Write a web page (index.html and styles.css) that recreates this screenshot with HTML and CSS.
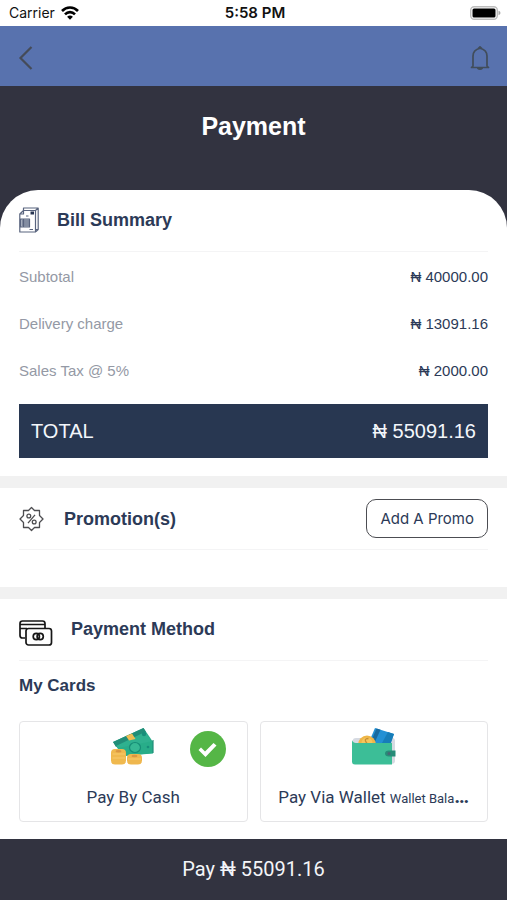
FILE: index.html
```html
<!DOCTYPE html>
<html lang="en">
<head>
<meta charset="utf-8">
<meta name="viewport" content="width=device-width, initial-scale=1">
<title>Payment</title>
<link rel="stylesheet" href="styles.css">
</head>
<body>
<div class="status">
  <div class="carrier">Carrier
    <svg width="18" height="14" viewBox="0 0 18 14" fill="none" stroke="#000" stroke-width="2.6" aria-hidden="true"><path d="M1 5C5.500 .3 12.500 .3 17 5M4 8.300C6.800 5.400 11.200 5.400 14 8.300"/><path d="M9 13.800 6.100 10.800Q9 8.400 11.900 10.800Z" fill="#000" stroke="none"/></svg>
  </div>
  <div class="time">5:58 PM</div>
  <svg class="battery" width="31" height="14" viewBox="0 0 31 14" aria-hidden="true"><rect x=".7" y=".7" width="26.600" height="12.600" rx="3.500" fill="#fff" stroke="#bdbdbd" stroke-width="1.400"/><rect x="2.500" y="2.500" width="23" height="9" rx="1.500"/><path d="M28.500 4.800q2 .6 2 2.200t-2 2.200z" fill="#aaa"/></svg>
</div>
<header class="nav">
  <button class="icon-button" type="button" aria-label="Back">
    <svg width="16" height="26" viewBox="0 0 16 26" fill="none" stroke="#454b58" stroke-width="2.200" aria-hidden="true"><path d="M14.500 2 3.500 13 14.500 24"/></svg>
  </button>
  <button class="icon-button" type="button" aria-label="Notifications">
    <svg width="20" height="26" viewBox="0 0 20 26" fill="none" stroke="#414d5b" stroke-width="1.700" stroke-linejoin="round" aria-hidden="true"><path d="M3 21V11C3 7 6 4.300 10 3.300C14 4.300 17 7 17 11V21L18.500 22.500H1.500ZM8.200 3.600 10 1.800 11.800 3.600M7.500 23Q10 25.300 12.500 23"/></svg>
  </button>
</header>
<main>
  <div class="hero"><h1>Payment</h1></div>
  <div class="backdrop">
    <section class="panel bill">
      <div class="heading">
        <svg width="20" height="26" viewBox="0 0 20 26" fill="none" stroke="#59647e" stroke-width="1.200" stroke-linejoin="round" aria-hidden="true"><path d="M4.500 3.500V1H19.200V22.500H17M16.500 3.500 19.200 1M.8 7 4.500 3.500H16.500V25H.8ZM.8 7H4.500V3.500M17 24.500 19.200 22.500"/><path d="M1.500 12H10.500V20H1.500Z" fill="#aeb6c5"/><path d="M3 14H10M3 16H10M3 18H10M4.500 12V20M7 9H9.500M10.500 22.500H14"/><path d="M11.500 4.500H15V7.500H11.500Z" fill="#283653" stroke="none"/></svg>
        <h2>Bill Summary</h2>
      </div>
      <dl class="charges">
        <div><dt>Subtotal</dt><dd>₦ 40000.00</dd></div>
        <div><dt>Delivery charge</dt><dd>₦ 13091.16</dd></div>
        <div><dt>Sales Tax @ 5%</dt><dd>₦ 2000.00</dd></div>
      </dl>
      <div class="total"><span>TOTAL</span><span>₦ 55091.16</span></div>
    </section>
  </div>
  <section class="panel promo">
    <div class="heading">
      <svg width="25" height="26" viewBox="0 0 25 26" fill="none" stroke="#4d4d50" stroke-width="1.300" stroke-linejoin="round" aria-hidden="true"><path d="M12.500 1.500 15.500 4.500H20.500V9.500L24 13 20.500 16.500V21.500H15.500L12.500 24.500 9.500 21.500H4.500V16.500L1 13 4.500 9.500V4.500H9.500Z"/><circle cx="9.800" cy="10" r="1.900"/><circle cx="15.200" cy="16" r="1.900"/><path d="M16 8.800 9 17.200"/></svg>
      <h2>Promotion(s)</h2>
      <button class="add" type="button">Add A Promo</button>
    </div>
  </section>
  <section class="panel method">
    <div class="heading">
      <svg width="34" height="34" viewBox="0 -8 34 34" fill="none" stroke="#171717" stroke-width="1.700" aria-hidden="true"><path d="M6 18H3.500Q1 18 1 15.500V3.500Q1 1 3.500 1H23.500Q26 1 26 3.500V8M1 4.500H26M1 8.500H8"/><rect x="7" y="8.500" width="25.500" height="16.500" rx="2.500" fill="#fff"/><circle cx="17.300" cy="16.500" r="3.100"/><circle cx="21.200" cy="16.500" r="3.100"/></svg>
      <h2>Payment Method</h2>
    </div>
    <h3>My Cards</h3>
    <div class="cards">
      <label class="card">
        <input type="radio" name="method" checked>
        <svg width="44" height="40" viewBox="0 0 44 40" aria-hidden="true"><path d="M2 15 32.500 1 42 15 13 30Z" fill="#2aaa8b"/><path d="M2 15 32.500 1 35 5 5 20Z" fill="#218d78"/><path d="M5 19 34 5 39 12 42 26 13 29Z" fill="#2fb18f"/><path d="M7 21 42 14V26.500L10 29Z" fill="#28ad89"/><path d="M42 13V26" stroke="#218d78" stroke-width="1.200"/><ellipse cx="24" cy="20.500" rx="5.500" ry="5" fill="#36b894" stroke="#168d76" stroke-width="1.200"/><circle cx="33" cy="7" r="2.200" fill="#178e7a"/><circle cx="37" cy="20" r="1.300" fill="#178e7a"/><path d="M15 9 21 6.500 24.500 12 18 13.500Z" fill="#efbd53"/><rect y="22" width="15" height="15.500" rx="4" fill="#f0b94e"/><rect x="16" y="27" width="15" height="10.500" rx="4" fill="#efb74e"/><path d="M1.500 27H14M1.500 31H14M17 32H30" stroke="#f8ca6d" stroke-width="1.200"/><ellipse cx="7.500" cy="24.300" rx="3" ry="1.300" fill="#d99643"/><ellipse cx="23.500" cy="29" rx="3" ry="1.300" fill="#d99643"/></svg>
        <span class="name">Pay By Cash</span>
      </label>
      <label class="card">
        <input type="radio" name="method">
        <svg width="44" height="40" viewBox="0 0 44 40" aria-hidden="true"><path d="M1 15V13Q1 11 4 11H40Q43 11 43 14V34Q43 37 39 37H4Z" fill="#d6dae2"/><path d="M17 15 23 1 42 7 38 16.500H17Z" fill="#2290d4"/><path d="M24.500 1.500 28.500 2.700 22 17H18Z" fill="#17699f"/><path d="M36 5 42 7 39 16 30 16Z" fill="#167db9"/><circle cx="15" cy="17.500" r="9" fill="#efb647"/><circle cx="15" cy="16" r="5.500" fill="#f6c65c"/><path d="M16.500 11.500Q12.500 11.500 13.500 14T16 17" fill="none" stroke="#c58d35" stroke-width="1.300"/><path d="M0 13Q1 16 4 16H40V37.500H3Q0 37.500 0 34.500Z" fill="#3cbe97"/><path d="M43.500 23.500H37Q33 23.500 33 26.500T37 29.500H43.500Z" fill="#278c78"/><circle cx="37" cy="26.500" r="1.500" fill="#4b6475"/></svg>
        <span class="name">Pay Via Wallet <small>Wallet Bala</small><b>…</b></span>
      </label>
    </div>
  </section>
</main>
<button class="pay" type="button">Pay ₦ 55091.16</button>
</body>
</html>
```
FILE: styles.css
```css
* { box-sizing: border-box; }

body {
  margin: 0;
  min-height: 100vh;
  display: flex;
  flex-direction: column;
  background: #fff;
  color: #2c3a57;
  font-family: "Liberation Sans", Arial, sans-serif;
}

h1, h2, h3, dl, dd { margin: 0; }
button { font: inherit; color: inherit; cursor: pointer; }
svg { display: block; flex: none; }

.status {
  display: grid;
  grid-template-columns: 1fr auto 1fr;
  align-items: center;
  height: 26px;
  padding: 0 6px 0 9px;
  color: #111;
  font: 14px/26px Inter, sans-serif;
}
.carrier { display: flex; align-items: center; gap: 6px; }
.time { font-size: 15px; font-weight: 600; }
.battery { justify-self: end; }

.nav {
  display: flex;
  align-items: center;
  justify-content: space-between;
  height: 60px;
  padding: 4px 17px 0;
  background: #5872ae;
}
.icon-button { padding: 0; border: 0; background: none; }

.hero { padding: 24px 20px 48px; background: #323340; text-align: center; }
h1 { color: #fff; font-size: 25px; line-height: 32px; }
.backdrop { background: #323340; }

.panel { padding: 0 19px; background: #fff; }
.bill { padding-bottom: 18px; border-radius: 38px 38px 0 0; }
.heading {
  display: flex;
  align-items: center;
  gap: 18px;
  height: 62px;
  border-bottom: 1px solid #f4f4f5;
}
h2 { font-size: 18px; line-height: 24px; }
h3 { padding: 13px 0; font-size: 17px; line-height: 24px; }

.charges { padding: 1px 0 10px; font-size: 15px; line-height: 47px; }
.charges div { display: flex; justify-content: space-between; }
.charges dt { color: #9499a5; }

.total {
  display: flex;
  justify-content: space-between;
  padding: 0 12px;
  background: #283751;
  color: #f3f6fb;
  font-size: 20px;
  line-height: 54px;
}

.promo, .method { border-top: 12px solid #f1f1f1; }
.promo { padding-bottom: 37px; }
.promo .heading { gap: 20px; }
.add {
  height: 39px;
  margin-left: auto;
  padding: 0 13px;
  border: 1px solid #4c4d52;
  border-radius: 10px;
  background: #fff;
  font: 15px Inter, sans-serif;
}
.method { padding-bottom: 15px; }
.bill .heading, .method .heading { padding-bottom: 2px; }

.cards { display: grid; grid-template-columns: 1fr 1fr; gap: 12px; padding-top: 10px; }
.card {
  position: relative;
  display: flex;
  flex-direction: column;
  align-items: center;
  gap: 18px;
  min-width: 0;
  padding: 5px 14px 12px;
  border: 1px solid #e5e5e7;
  border-radius: 4px;
  cursor: pointer;
}
.card input {
  appearance: none;
  position: absolute;
  top: 9px;
  right: 21px;
  width: 36px;
  height: 36px;
  margin: 0;
  border-radius: 50%;
}
.card input:checked { background: #55b646; }
.card input:checked::after {
  content: "";
  position: absolute;
  inset: 0;
  background: #fff;
  clip-path: path("M9 19 L11.500 16.500 L15.500 20.500 L24 12 L27 14.500 L16 26 Z");
}
.name {
  height: 24px;
  white-space: nowrap;
  font: 17px/24px Roboto, sans-serif;
}
.name small { font-size: 13px; }
.name b { font-size: 20px; line-height: 20px; }

.pay {
  width: 100%;
  margin-top: auto;
  padding: 0;
  border: 0;
  background: #323340;
  color: #f4f5f8;
  font: 20px/61px Roboto, sans-serif;
}
```
